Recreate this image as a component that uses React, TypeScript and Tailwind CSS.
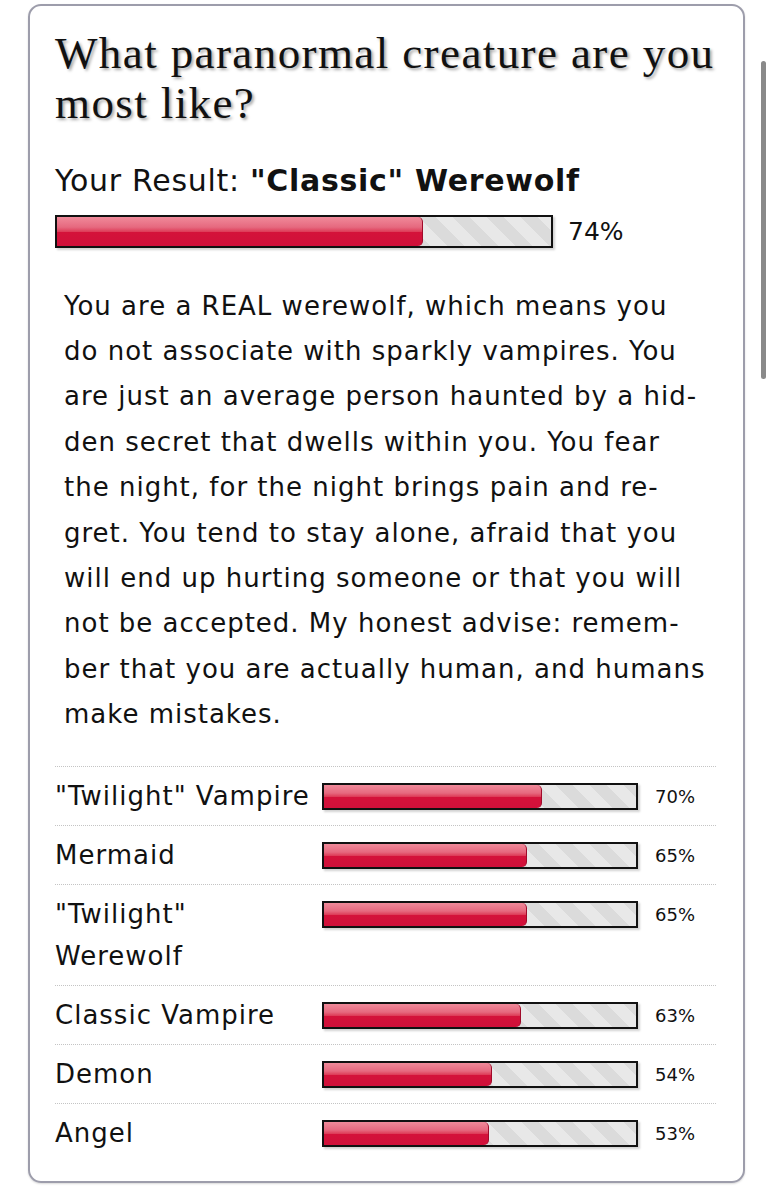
import React from "react";

const rows: { label: string; pct: number }[] = [
  { label: '"Twilight" Vampire', pct: 70 },
  { label: "Mermaid", pct: 65 },
  { label: '"Twilight" Werewolf', pct: 65 },
  { label: "Classic Vampire", pct: 63 },
  { label: "Demon", pct: 54 },
  { label: "Angel", pct: 53 },
];

const lines = [
  "You are a REAL werewolf, which means you",
  "do not associate with sparkly vampires. You",
  "are just an average person haunted by a hid-",
  "den secret that dwells within you. You fear",
  "the night, for the night brings pain and re-",
  "gret. You tend to stay alone, afraid that you",
  "will end up hurting someone or that you will",
  "not be accepted. My honest advise: remem-",
  "ber that you are actually human, and humans",
  "make mistakes.",
];

function Bar({ pct, h }: { pct: number; h: string }) {
  return (
    <div
      className={`relative w-full ${h} border-2 border-[#111] bg-[repeating-linear-gradient(45deg,#e8e8e8_0px,#e8e8e8_12px,#dbdbdb_12px,#dbdbdb_24px)] shadow-[2px_2px_2px_rgba(0,0,0,0.18)]`}
    >
      <div
        className="h-full rounded-r-[5px] border-r border-[#a00a2a] bg-[linear-gradient(to_bottom,#f08a9a_0%,#e6697f_35%,#de3e5a_50%,#d4123a_52%,#d0103a_100%)]"
        style={{ width: `${pct}%` }}
      />
    </div>
  );
}

export default function App() {
  return (
    <div className="relative min-h-[1199px] bg-white pl-[28px] pt-[4px] font-['DejaVu_Sans',sans-serif] text-[#111]">
      <div className="w-[717px] rounded-[13px] border-2 border-[#9d9dab] px-[25px] pb-[19px] pt-[22px] shadow-[0_1px_2px_rgba(0,0,0,0.15)]">
        <h1 className="font-['Liberation_Serif',serif] text-[45px] leading-[50px] tracking-[1.4px] text-[#111] [text-shadow:2px_2px_3px_rgba(0,0,0,0.35)]">
          What paranormal creature are you most like?
        </h1>
        <div className="mt-[35px] text-[30px] leading-[36px] tracking-[0.7px]">
          Your Result: <b>"Classic" Werewolf</b>
        </div>
        <div className="mt-[14px] flex items-center">
          <div className="w-[498px]">
            <Bar pct={74} h="h-[33px]" />
          </div>
          <span className="ml-[15px] text-[25px]">74%</span>
        </div>
        <div className="mt-[33px] pl-[9px] text-[26px] leading-[45.4px] tracking-[1px]">
          {lines.map((l, i) => (
            <div key={i} className="whitespace-nowrap">
              {l}
            </div>
          ))}
        </div>
        <div className="mt-[28px] mr-[2px]">
          {rows.map((r, i) => (
            <div
              key={i}
              className="grid grid-cols-[267px_316px_1fr] border-t border-dotted border-[#c4c4c4] py-[8px]"
            >
              <div className="text-[26px] leading-[42px] tracking-[1px]">{r.label}</div>
              <div className="pt-[8px]">
                <Bar pct={r.pct} h="h-[27px]" />
              </div>
              <div className="pl-[17px] pt-[12px] text-[18px] leading-[20px]">{r.pct}%</div>
            </div>
          ))}
        </div>
      </div>
      <div className="absolute left-[761px] top-[61px] h-[318px] w-[5px] rounded-full bg-[#8a8a8a]" />
    </div>
  );
}
